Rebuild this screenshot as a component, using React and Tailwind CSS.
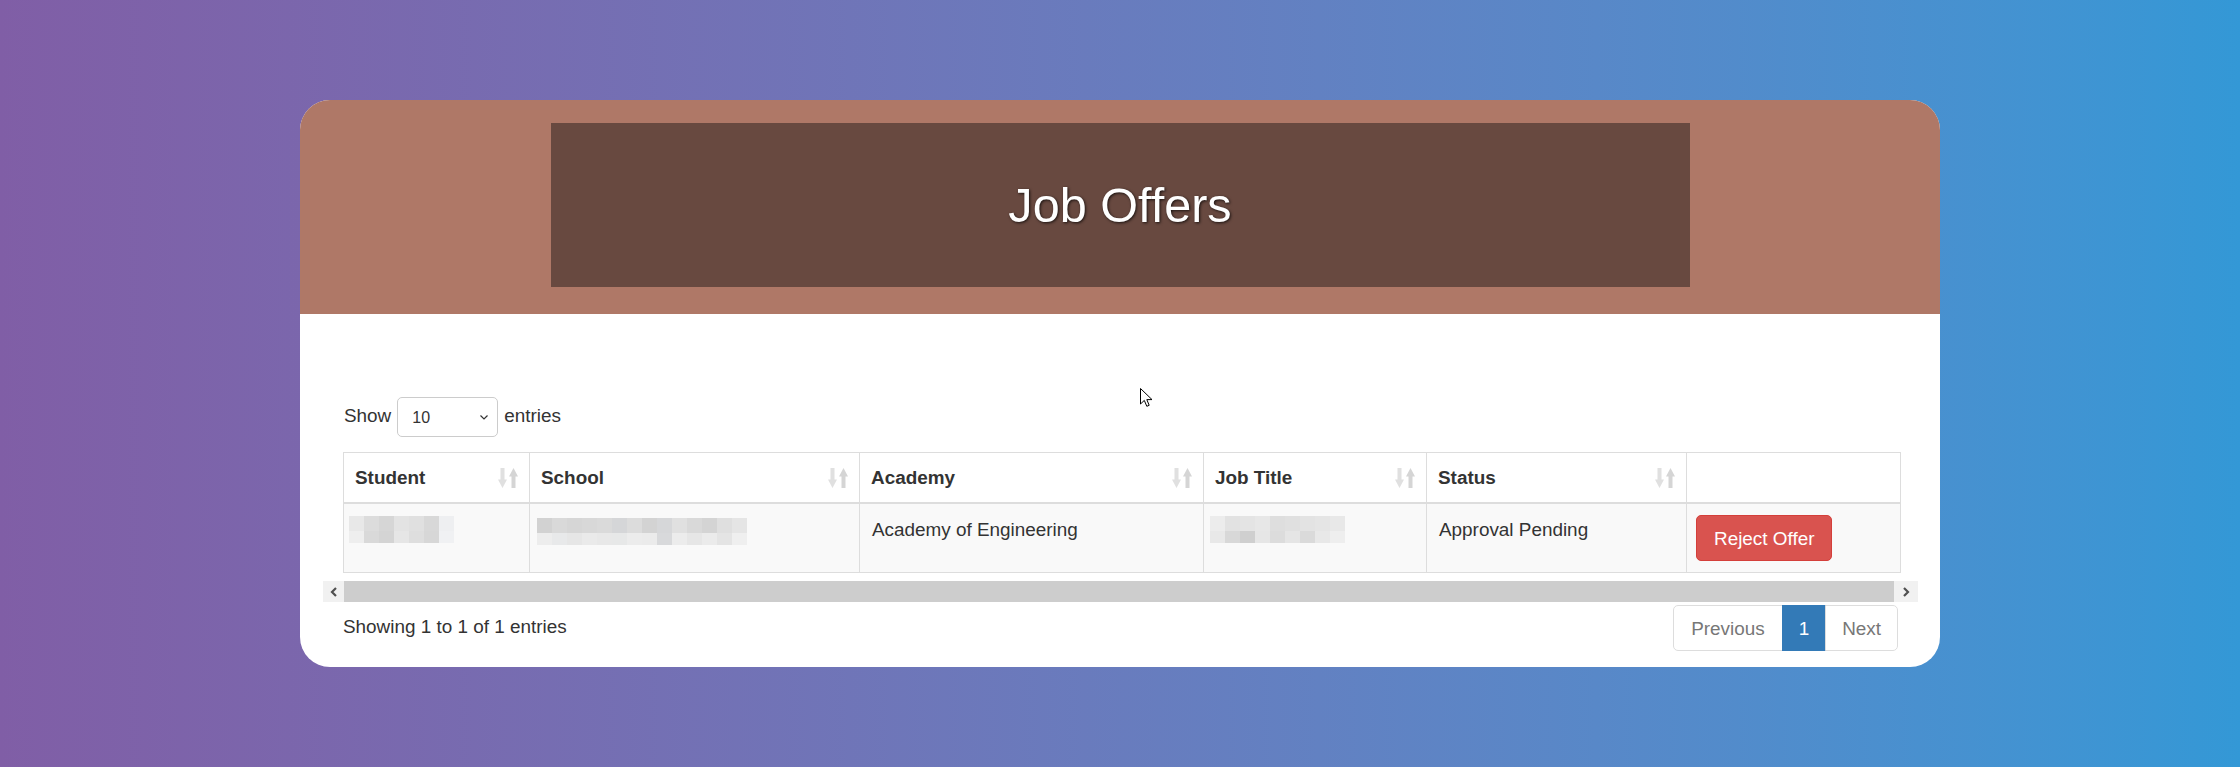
import React from "react";

const FONT = { fontFamily: '"Liberation Sans", Arial, Helvetica, sans-serif' };

const studentPx = [
  ["#e8e8e8", "#dcdcdc", "#d6d6d6", "#e3e3e3", "#e0e0e0", "#d8d8d8", "#eeeff1"],
  ["#eeeeee", "#d9d9d9", "#d4d4d4", "#e6e6e6", "#dedede", "#d7d7d7", "#f0f1f3"],
];
const schoolPx = [
  ["#d2d2d2", "#d9d9d9", "#d6d6d6", "#d8d8d8", "#dadada", "#d5d6d8", "#dcdcdc", "#d3d3d3", "#d6d7d9", "#e0e0e0", "#d9d9d9", "#d4d4d4", "#dfdfdf", "#e5e5e5"],
  ["#ededed", "#e8e9ea", "#e6e6e6", "#eaeaea", "#e8e8e8", "#e7e8e8", "#ececec", "#ebebeb", "#d8d9db", "#ececec", "#e6e6e6", "#ebebeb", "#e4e4e4", "#efefef"],
];
const jobPx = [
  ["#ececec", "#e2e2e2", "#e4e4e4", "#e7e7e7", "#dedede", "#e0e0e0", "#e3e3e3", "#e5e5e5", "#e8e8e8"],
  ["#e8e8e8", "#d8d8d8", "#cfcfcf", "#e6e6e6", "#dcdcdc", "#e5e5e5", "#dadada", "#e8e8e8", "#eeeeee"],
];

function Pixels({ rows }) {
  const heights = [15, 12];
  return (
    <div className="flex flex-col">
      {rows.map((row, i) => (
        <div key={i} className="flex">
          {row.map((c, j) => (
            <div key={j} style={{ background: c, width: 15, height: heights[i] }} />
          ))}
        </div>
      ))}
    </div>
  );
}

function SortIcon() {
  return (
    <svg width="20" height="20" viewBox="0 0 20 20" className="shrink-0">
      <path d="M2.5 0h4v11.5h2.5L4.5 20L0 11.5h2.5z" fill="#e0e0e0" />
      <path d="M15.5 0L20 8.5h-2.5V20h-4V8.5H11z" fill="#d5d5d5" />
    </svg>
  );
}

const heads = ["Student", "School", "Academy", "Job Title", "Status", ""];

export default function App() {
  return (
    <div
      className="relative w-full min-h-[767px] bg-linear-to-r from-[#805ea6] to-[#3398d6] pt-[100px] text-[#333333]"
      style={FONT}
    >
      <div className="mx-auto w-[1640px] bg-white rounded-[30px] overflow-hidden">
        {/* Header */}
        <div className="h-[214px] bg-[#af7867] pt-[23px]">
          <div className="mx-auto w-[1139px] h-[164px] bg-[#684940] flex items-center justify-center">
            <h1 className="text-white text-[48.6px] leading-[54px] font-normal [text-shadow:1px_1px_3px_rgba(0,0,0,0.75)]">
              Job Offers
            </h1>
          </div>
        </div>

        {/* Body */}
        <div className="pl-[23px] pr-[22px] pt-[83px] pb-[16px] text-[18.9px] leading-[27px]">
          {/* Show entries */}
          <div className="pl-[21px] flex items-center h-[40px] gap-[6px]">
            <span className="mb-[4px]">Show</span>
            <div className="w-[101px] h-[40px] border border-[#cccccc] rounded-[5px] flex items-center justify-between pl-[14px] pr-[9px] text-[16px]">
              <span>10</span>
              <svg width="8" height="5" viewBox="0 0 8 5">
                <path d="M0.5 0.5L4 4L7.5 0.5" fill="none" stroke="#333" strokeWidth="1.2" />
              </svg>
            </div>
            <span className="mb-[4px]">entries</span>
          </div>

          {/* Table */}
          <div className="pl-[20px] mt-[15px]">
            <table className="w-[1557px] table-fixed border-collapse border border-[#dddddd]">
              <colgroup>
                <col className="w-[186px]" />
                <col className="w-[330px]" />
                <col className="w-[344px]" />
                <col className="w-[223px]" />
                <col className="w-[260px]" />
                <col className="w-[214px]" />
              </colgroup>
              <thead>
                <tr className="bg-white">
                  {heads.map((h, i) => (
                    <th
                      key={i}
                      className="border border-[#dddddd] border-b-2 px-[11px] py-[11px] text-left font-bold leading-[27px]"
                    >
                      {h ? (
                        <div className="flex items-center justify-between">
                          <span>{h}</span>
                          <SortIcon />
                        </div>
                      ) : (
                        <div className="h-[27px]" />
                      )}
                    </th>
                  ))}
                </tr>
              </thead>
              <tbody>
                <tr className="bg-[#f9f9f9] align-top">
                  <td className="border border-[#dddddd] pl-[5px] pr-[11px] pt-[12px] pb-[11px]">
                    <Pixels rows={studentPx} />
                  </td>
                  <td className="border border-[#dddddd] pl-[7px] pr-[11px] pt-[14px] pb-[11px]">
                    <Pixels rows={schoolPx} />
                  </td>
                  <td className="border border-[#dddddd] px-[12px] pt-[12px] pb-[10px]">Academy of Engineering</td>
                  <td className="border border-[#dddddd] pl-[6px] pr-[11px] pt-[12px] pb-[11px]">
                    <Pixels rows={jobPx} />
                  </td>
                  <td className="border border-[#dddddd] px-[12px] pt-[12px] pb-[10px]">Approval Pending</td>
                  <td className="border border-[#dddddd] pl-[9px] pr-[11px] py-[11px]">
                    <button className="h-[46px] px-[17px] bg-[#d9534f] border border-[#d43f3a] rounded-[5px] text-white text-[18.9px] leading-[27px]">
                      Reject Offer
                    </button>
                  </td>
                </tr>
              </tbody>
            </table>
          </div>

          {/* Scrollbar */}
          <div className="mt-[8px] flex h-[21px]">
            <div className="w-[21px] h-[21px] bg-[#f1f1f1] flex items-center justify-center">
              <svg width="8" height="10" viewBox="0 0 8 10">
                <path d="M6 1L2 5L6 9" fill="none" stroke="#505050" strokeWidth="2.2" />
              </svg>
            </div>
            <div className="flex-1 bg-[#cdcdcd]" />
            <div className="w-[24px] h-[21px] bg-[#f1f1f1] flex items-center justify-center">
              <svg width="8" height="10" viewBox="0 0 8 10">
                <path d="M2 1L6 5L2 9" fill="none" stroke="#505050" strokeWidth="2.2" />
              </svg>
            </div>
          </div>

          {/* Info + pagination */}
          <div className="pl-[20px] pr-[20px] pt-[3px] flex justify-between items-start">
            <div className="pt-[8px]">Showing 1 to 1 of 1 entries</div>
            <div className="flex h-[46px]">
              <div className="h-[46px] px-[17px] flex items-center border border-[#dddddd] rounded-l-[5px] bg-white text-[#777777]">
                Previous
              </div>
              <div className="h-[46px] px-[16px] -ml-px flex items-center border border-[#337ab7] bg-[#337ab7] text-white">
                1
              </div>
              <div className="h-[46px] px-[16px] -ml-px flex items-center border border-[#dddddd] rounded-r-[5px] bg-white text-[#777777]">
                Next
              </div>
            </div>
          </div>
        </div>
      </div>

      {/* mouse cursor */}
      <svg
        className="absolute left-[1140px] top-[388px]"
        width="13"
        height="20"
        viewBox="0 0 13 20"
      >
        <path
          d="M0.5 0.5L0.5 16L4.3 12.4L6.8 18.3L9.2 17.3L6.8 11.6L12 11.6Z"
          fill="#ffffff"
          stroke="#000000"
          strokeWidth="1"
          strokeLinejoin="round"
        />
      </svg>
    </div>
  );
}
